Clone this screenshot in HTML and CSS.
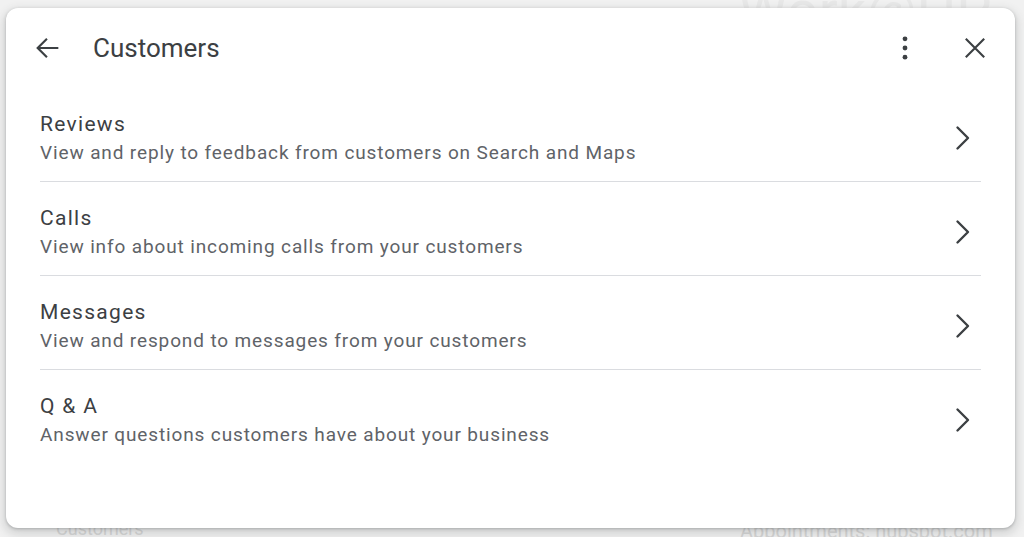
FILE: index.html
```html
<!DOCTYPE html>
<html lang="en">
<head>
<meta charset="utf-8">
<title>Customers</title>
<link rel="stylesheet" href="styles.css">
</head>
<body>
<div class="backdrop">
  <div class="bg-text bg-big">Work@HP</div>
  <div class="bg-text bg-left">Customers</div>
  <div class="bg-text bg-right">Appointments: hubspot.com</div>
  <div class="dialog">
    <header class="dialog-header">
      <button class="icon-btn" aria-label="Back">
        <svg viewBox="0 0 24 24" width="34" height="34"><path d="M20 11.25H7.2l5.3-5.3-1.06-1.06L4.33 12l7.11 7.11 1.06-1.06-5.3-5.3H20z" fill="#3c4043"/></svg>
      </button>
      <h1 class="title">Customers</h1>
      <div class="header-actions">
        <button class="icon-btn" aria-label="More">
          <svg viewBox="0 0 24 24" width="34" height="34"><circle cx="12" cy="5.5" r="1.7" fill="#3c4043"/><circle cx="12" cy="12" r="1.7" fill="#3c4043"/><circle cx="12" cy="18.5" r="1.7" fill="#3c4043"/></svg>
        </button>
        <button class="icon-btn" aria-label="Close">
          <svg viewBox="0 0 24 24" width="34" height="34"><path d="M5.5 5.5L18.5 18.5M18.5 5.5L5.5 18.5" stroke="#3c4043" stroke-width="1.5" fill="none"/></svg>
        </button>
      </div>
    </header>
    <ul class="list">
      <li class="row">
        <div class="row-text">
          <div class="row-title">Reviews</div>
          <div class="row-sub">View and reply to feedback from customers on Search and Maps</div>
        </div>
        <svg class="chev" viewBox="0 0 16 26" width="16" height="26"><path d="M2.5 2.5L13 13 2.5 23.5" stroke="#3c4043" stroke-width="2.4" fill="none" stroke-linecap="round" stroke-linejoin="round"/></svg>
      </li>
      <li class="row">
        <div class="row-text">
          <div class="row-title">Calls</div>
          <div class="row-sub">View info about incoming calls from your customers</div>
        </div>
        <svg class="chev" viewBox="0 0 16 26" width="16" height="26"><path d="M2.5 2.5L13 13 2.5 23.5" stroke="#3c4043" stroke-width="2.4" fill="none" stroke-linecap="round" stroke-linejoin="round"/></svg>
      </li>
      <li class="row">
        <div class="row-text">
          <div class="row-title">Messages</div>
          <div class="row-sub">View and respond to messages from your customers</div>
        </div>
        <svg class="chev" viewBox="0 0 16 26" width="16" height="26"><path d="M2.5 2.5L13 13 2.5 23.5" stroke="#3c4043" stroke-width="2.4" fill="none" stroke-linecap="round" stroke-linejoin="round"/></svg>
      </li>
      <li class="row last">
        <div class="row-text">
          <div class="row-title">Q &amp; A</div>
          <div class="row-sub">Answer questions customers have about your business</div>
        </div>
        <svg class="chev" viewBox="0 0 16 26" width="16" height="26"><path d="M2.5 2.5L13 13 2.5 23.5" stroke="#3c4043" stroke-width="2.4" fill="none" stroke-linecap="round" stroke-linejoin="round"/></svg>
      </li>
    </ul>
  </div>
</div>
</body>
</html>
```
FILE: styles.css
```css
* { box-sizing: border-box; }
html, body { margin: 0; padding: 0; }
body {
  width: 1024px;
  height: 537px;
  overflow: hidden;
  font-family: Roboto, "Liberation Sans", Arial, sans-serif;
  background: #f1f1f1;
}
.backdrop {
  position: relative;
  width: 1024px;
  height: 537px;
  padding: 8px 9px 9px 6px;
  background: #f1f1f1;
}
.bg-text {
  position: absolute;
  color: #d6d6d6;
  white-space: nowrap;
}
.bg-big {
  top: -22px;
  left: 738px;
  font-size: 56px;
  color: #e8e8e8;
}
.bg-left {
  left: 56px;
  top: 518px;
  font-size: 18px;
}
.bg-right {
  left: 740px;
  top: 519px;
  font-size: 20px;
}
.dialog {
  position: relative;
  width: 1009px;
  height: 520px;
  background: #fff;
  border-radius: 12px;
  box-shadow: 0 1px 3px rgba(60,64,67,.3), 0 4px 8px 3px rgba(60,64,67,.15);
}
.dialog-header {
  display: flex;
  align-items: center;
  height: 80px;
  padding: 0 16px 0 16.5px;
}
.icon-btn {
  width: 48px;
  height: 48px;
  border: 0;
  background: none;
  padding: 0;
  display: flex;
  align-items: center;
  justify-content: center;
}
.title {
  margin: 0 0 0 22.5px;
  font-weight: 400;
  font-size: 26px;
  color: #3c4043;
  flex: 1;
}
.header-actions {
  display: flex;
  gap: 22px;
}
.list {
  list-style: none;
  margin: 0;
  padding: 0 34px;
}
.row {
  display: flex;
  align-items: center;
  padding: 22px 10px 16px 0;
  border-bottom: 1px solid #dadce0;
}
.row.last { border-bottom: 0; }
.row-text { flex: 1; }
.row-title {
  font-size: 21px;
  line-height: 28px;
  color: #3c4043;
  letter-spacing: 1.3px;
}
.row-sub {
  margin-top: 3px;
  font-size: 19px;
  line-height: 24px;
  color: #5f6368;
  letter-spacing: 0.87px;
}
.chev { flex: none; }
```
